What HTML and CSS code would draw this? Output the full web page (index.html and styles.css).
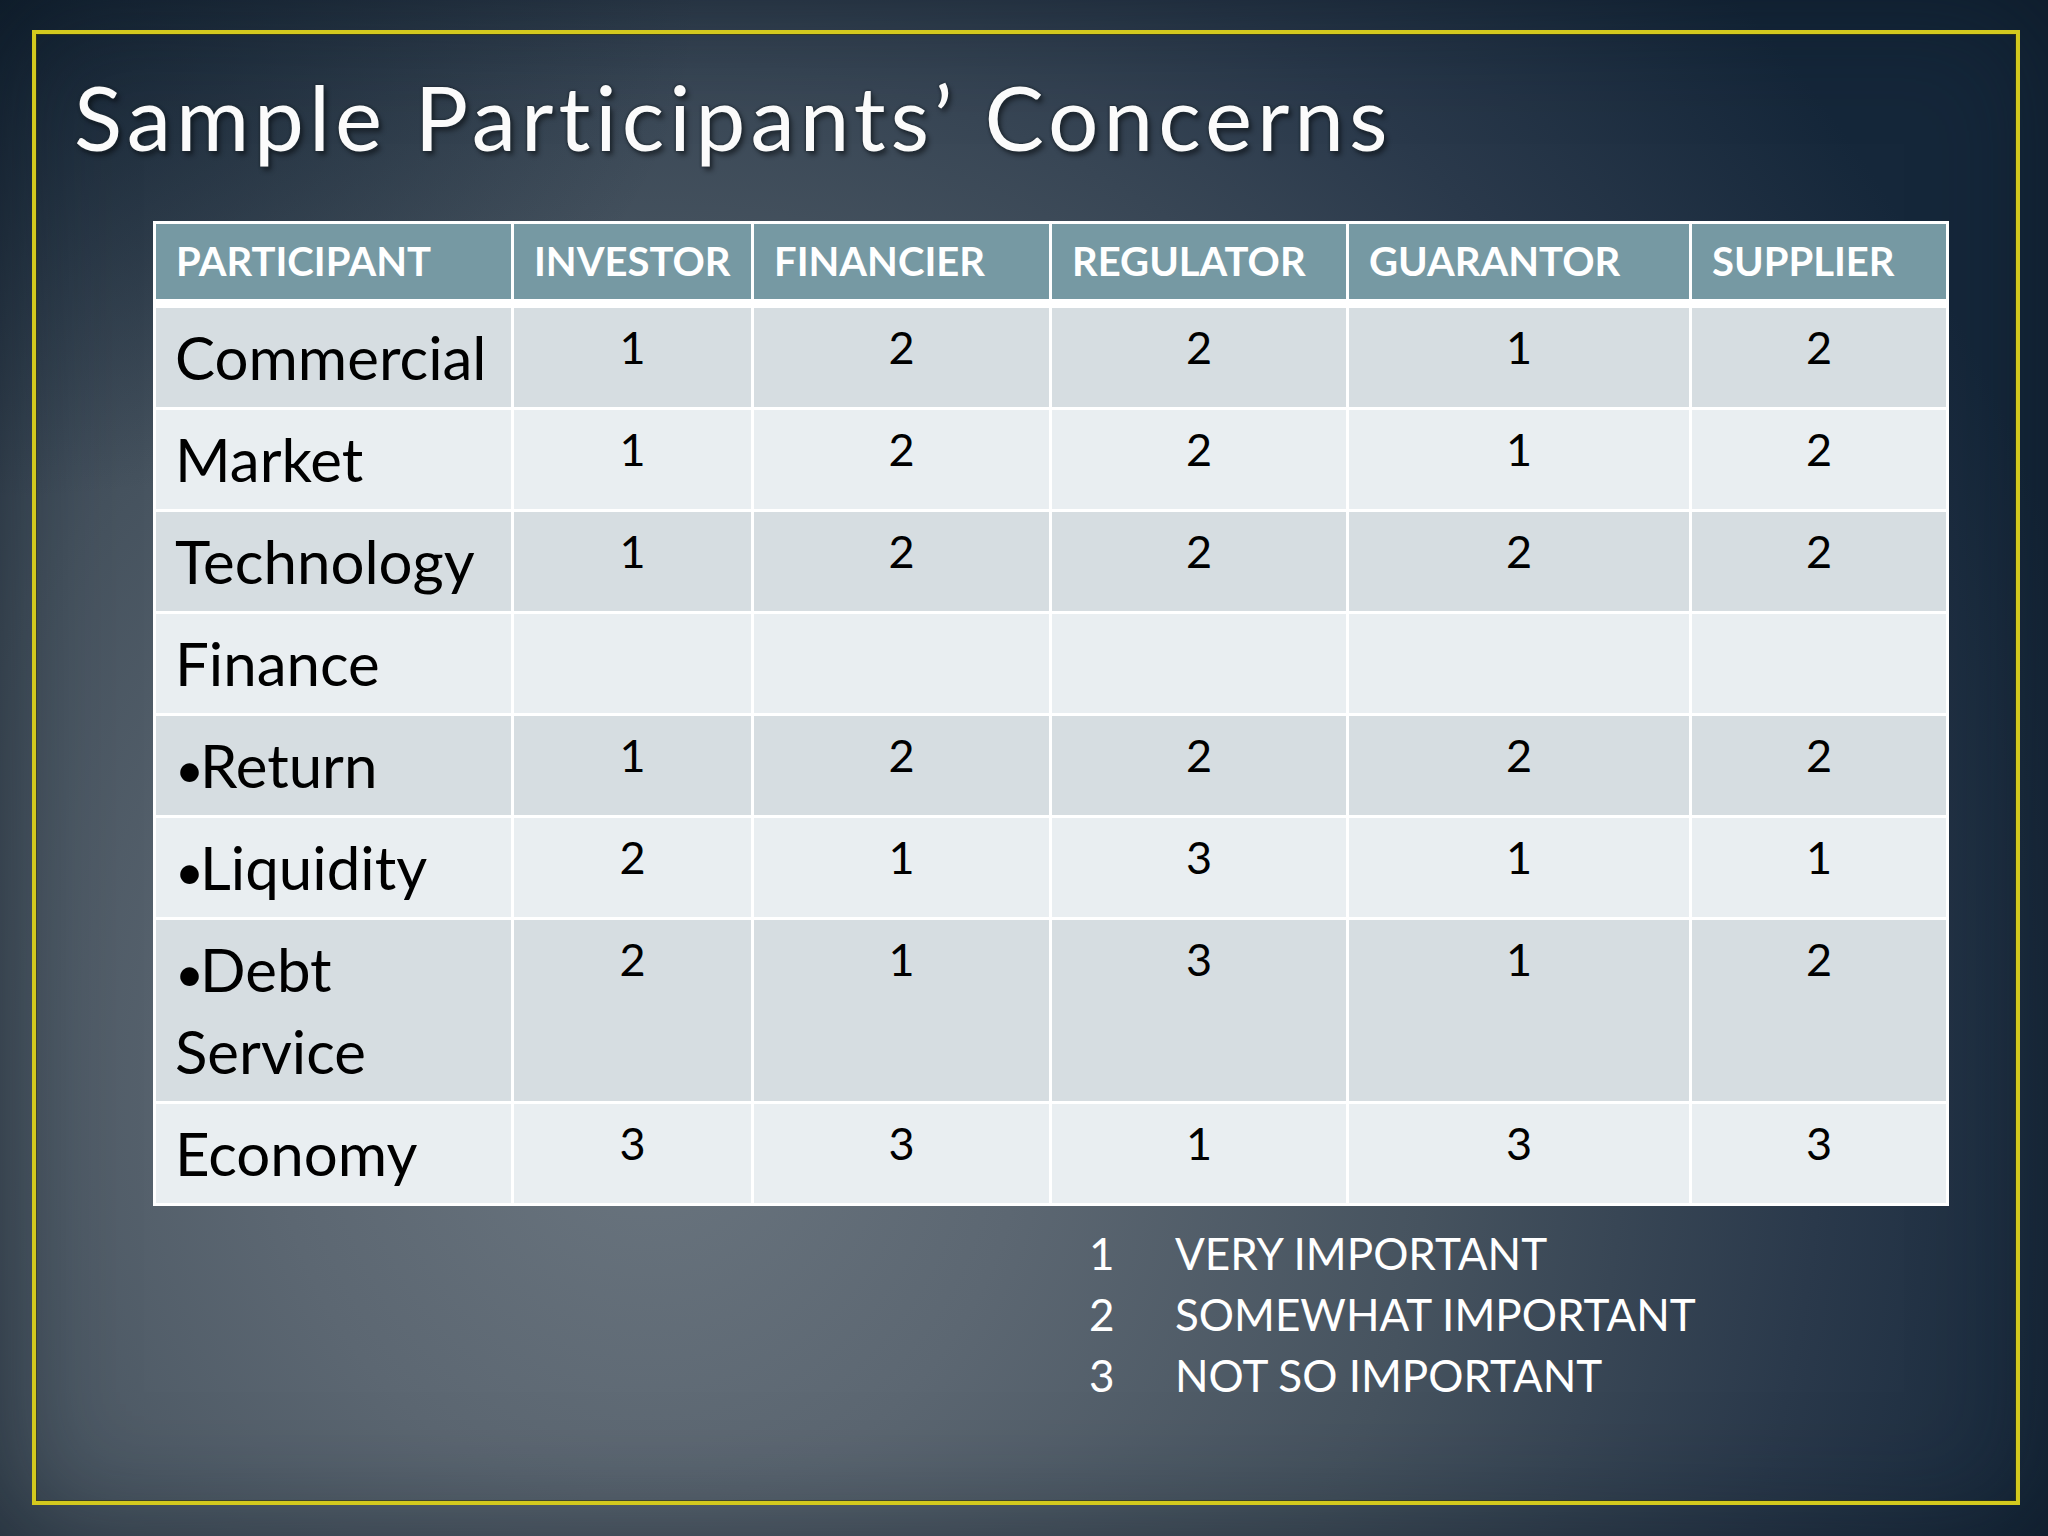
FILE: index.html
```html
<!DOCTYPE html>
<html lang="en">
<head>
<meta charset="utf-8">
<title>Sample Participants’ Concerns</title>
<link rel="stylesheet" href="styles.css">
</head>
<body>
<div class="slide">
  <div class="frame">
    <h1 class="title">Sample Participants’ Concerns</h1>
    <table class="grid">
      <colgroup>
        <col class="c1"><col class="c2"><col class="c3"><col class="c4"><col class="c5"><col class="c6">
      </colgroup>
      <thead>
        <tr>
          <th>PARTICIPANT</th><th>INVESTOR</th><th>FINANCIER</th><th>REGULATOR</th><th>GUARANTOR</th><th>SUPPLIER</th>
        </tr>
      </thead>
      <tbody>
        <tr class="odd"><td class="lbl">Commercial</td><td>1</td><td>2</td><td>2</td><td>1</td><td>2</td></tr>
        <tr class="even"><td class="lbl">Market</td><td>1</td><td>2</td><td>2</td><td>1</td><td>2</td></tr>
        <tr class="odd"><td class="lbl">Technology</td><td>1</td><td>2</td><td>2</td><td>2</td><td>2</td></tr>
        <tr class="even"><td class="lbl">Finance</td><td></td><td></td><td></td><td></td><td></td></tr>
        <tr class="odd"><td class="lbl"><span class="b">•</span>Return</td><td>1</td><td>2</td><td>2</td><td>2</td><td>2</td></tr>
        <tr class="even"><td class="lbl"><span class="b">•</span>Liquidity</td><td>2</td><td>1</td><td>3</td><td>1</td><td>1</td></tr>
        <tr class="odd"><td class="lbl"><span class="b">•</span>Debt<br>Service</td><td>2</td><td>1</td><td>3</td><td>1</td><td>2</td></tr>
        <tr class="even"><td class="lbl">Economy</td><td>3</td><td>3</td><td>1</td><td>3</td><td>3</td></tr>
      </tbody>
    </table>
    <div class="legend">
      <span class="num">1</span><span class="txt">VERY IMPORTANT</span>
      <span class="num">2</span><span class="txt">SOMEWHAT IMPORTANT</span>
      <span class="num">3</span><span class="txt">NOT SO IMPORTANT</span>
    </div>
  </div>
</div>
</body>
</html>
```
FILE: styles.css
```css
html, body {
  margin: 0;
  padding: 0;
}
body {
  width: 2048px;
  height: 1536px;
  overflow: hidden;
  font-family: Lato, "Open Sans", "Liberation Sans", sans-serif;
}
.slide {
  width: 2048px;
  height: 1536px;
  box-sizing: border-box;
  padding: 30px 28px 31px 32px;
  background:
    radial-gradient(ellipse 700px 500px at 0px 0px, rgba(8,24,38,0.6) 0%, rgba(8,24,38,0) 100%),
    radial-gradient(ellipse 1500px 1600px at 650px 1100px, #6a757f 0%, #5c6772 25%, #46535f 52%, #2a394b 78%, #15273a 100%);
  background-color: #1b2b3b;
  box-shadow: inset 0 0 120px 0 rgba(8,20,32,0.6);
}
.frame {
  height: 100%;
  box-sizing: border-box;
  border: 4px solid #d3c91e;
  box-shadow: inset 0 0 0 1px rgba(60,60,10,0.6);
  padding: 0 0 0 38px;
}
.title {
  margin: 29px 0 0 0;
  font-weight: 400;
  font-size: 89px;
  line-height: 107px;
  letter-spacing: 5px;
  color: #fbfbfb;
  text-shadow: 0 0 3px #1f2a33, 0 0 2px #1f2a33, 3px 4px 5px rgba(0,0,0,0.45);
}
.grid {
  margin: 51px 0 0 79px;
  border-collapse: collapse;
  table-layout: fixed;
  width: 1793px;
}
.c1 { width: 358px; }
.c2 { width: 240px; }
.c3 { width: 298px; }
.c4 { width: 297px; }
.c5 { width: 343px; }
.c6 { width: 257px; }
.grid th {
  background: #7699a3;
  color: #ffffff;
  font-weight: 700;
  font-size: 40px;
  line-height: 75px;
  text-align: left;
  padding: 0 0 0 20px;
  border: 3px solid #ffffff;
  border-bottom-width: 9px;
  white-space: nowrap;
}
.grid td {
  border: 3px solid #ffffff;
  vertical-align: top;
  text-align: center;
  color: #000000;
  font-size: 45px;
  line-height: 62px;
  padding: 8px 0 9px 0;
}
.grid td.lbl {
  text-align: left;
  font-size: 60px;
  line-height: 82px;
  padding-left: 19px;
}
.b {
  font-size: 50px;
  line-height: 0;
  letter-spacing: -4px;
}
.odd td { background: #d6dde1; }
.even td { background: #e9eef1; }
.legend {
  margin: 17px 0 0 1015px;
  display: grid;
  grid-template-columns: 86px auto;
  color: #ffffff;
  font-size: 44px;
  line-height: 61px;
}
```
